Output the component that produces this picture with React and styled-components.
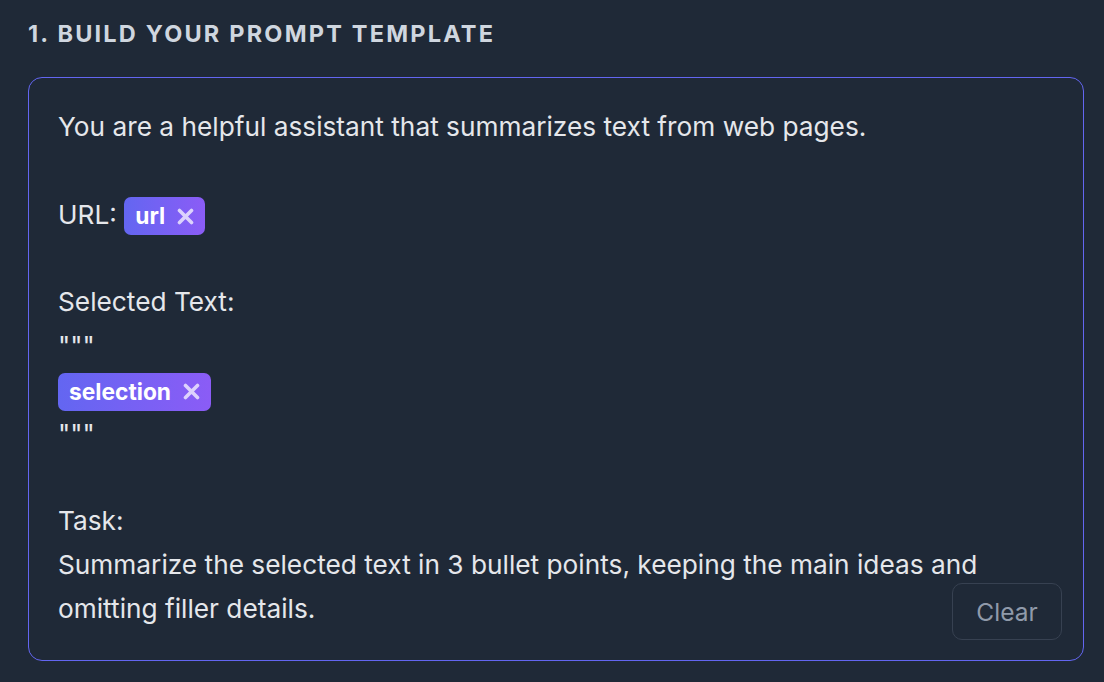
import React from "react";
import styled, { createGlobalStyle } from "styled-components";

const Global = createGlobalStyle`
  html, body { margin: 0; padding: 0; background: #1f2937; }
  body { font-family: Inter, "Noto Sans", sans-serif; -webkit-font-smoothing: antialiased; }
`;

const Page = styled.div`
  width: 1104px;
  height: 682px;
  box-sizing: border-box;
  padding: 19px 20px 0 28px;
  background: #1f2937;
  display: flex;
  flex-direction: column;
  gap: 28px;
`;

const Heading = styled.h2`
  margin: 0;
  font-family: Inter, sans-serif;
  font-size: 23.5px;
  line-height: 30px;
  font-weight: 700;
  letter-spacing: 2.2px;
  text-transform: uppercase;
  color: #cfd6df;
`;

const Editor = styled.div`
  position: relative;
  box-sizing: border-box;
  height: 584px;
  border: 1.5px solid #6366f1;
  border-radius: 14px;
  padding: 27px 29px;
  font-family: Inter, sans-serif;
  font-size: 26.25px;
  line-height: 43.8px;
  color: #e5e7eb;
`;

const Line = styled.div`
  min-height: 43.8px;
  white-space: pre-wrap;
`;

const Chip = styled.span`
  display: inline-flex;
  align-items: center;
  gap: 12px;
  height: 38px;
  box-sizing: border-box;
  padding: 0 11px 0 11px;
  border-radius: 7px;
  background: linear-gradient(90deg, #6366f1, #8b5cf6);
  color: #ffffff;
  font-size: 22.75px;
  font-weight: 700;
  line-height: 38px;
  vertical-align: middle;
`;

const ChipX = styled.svg`
  width: 17px;
  height: 17px;
  display: block;
`;

const ClearButton = styled.button`
  position: absolute;
  right: 21px;
  bottom: 20px;
  width: 110px;
  height: 57px;
  box-sizing: border-box;
  border: 1.5px solid #374151;
  border-radius: 10px;
  background: transparent;
  color: #909aaa;
  font-family: Inter, sans-serif;
  font-size: 24.5px;
  font-weight: 400;
  cursor: pointer;
`;

function Variable({ name }) {
  return (
    <Chip>
      {name}
      <ChipX viewBox="0 0 17 17">
        <path
          d="M2.5 2.5 L14.5 14.5 M14.5 2.5 L2.5 14.5"
          stroke="rgba(255,255,255,0.72)"
          strokeWidth="3.6"
          strokeLinecap="round"
        />
      </ChipX>
    </Chip>
  );
}

export default function App() {
  return (
    <>
      <Global />
      <Page>
        <Heading>1. Build your prompt template</Heading>
        <Editor>
          <Line>You are a helpful assistant that summarizes text from web pages.</Line>
          <Line />
          <Line>
            URL: <Variable name="url" />
          </Line>
          <Line />
          <Line>Selected Text:</Line>
          <Line>"""</Line>
          <Line>
            <Variable name="selection" />
          </Line>
          <Line>"""</Line>
          <Line />
          <Line>Task:</Line>
          <Line>
            Summarize the selected text in 3 bullet points, keeping the main ideas and omitting filler details.
          </Line>
          <ClearButton>Clear</ClearButton>
        </Editor>
      </Page>
    </>
  );
}
